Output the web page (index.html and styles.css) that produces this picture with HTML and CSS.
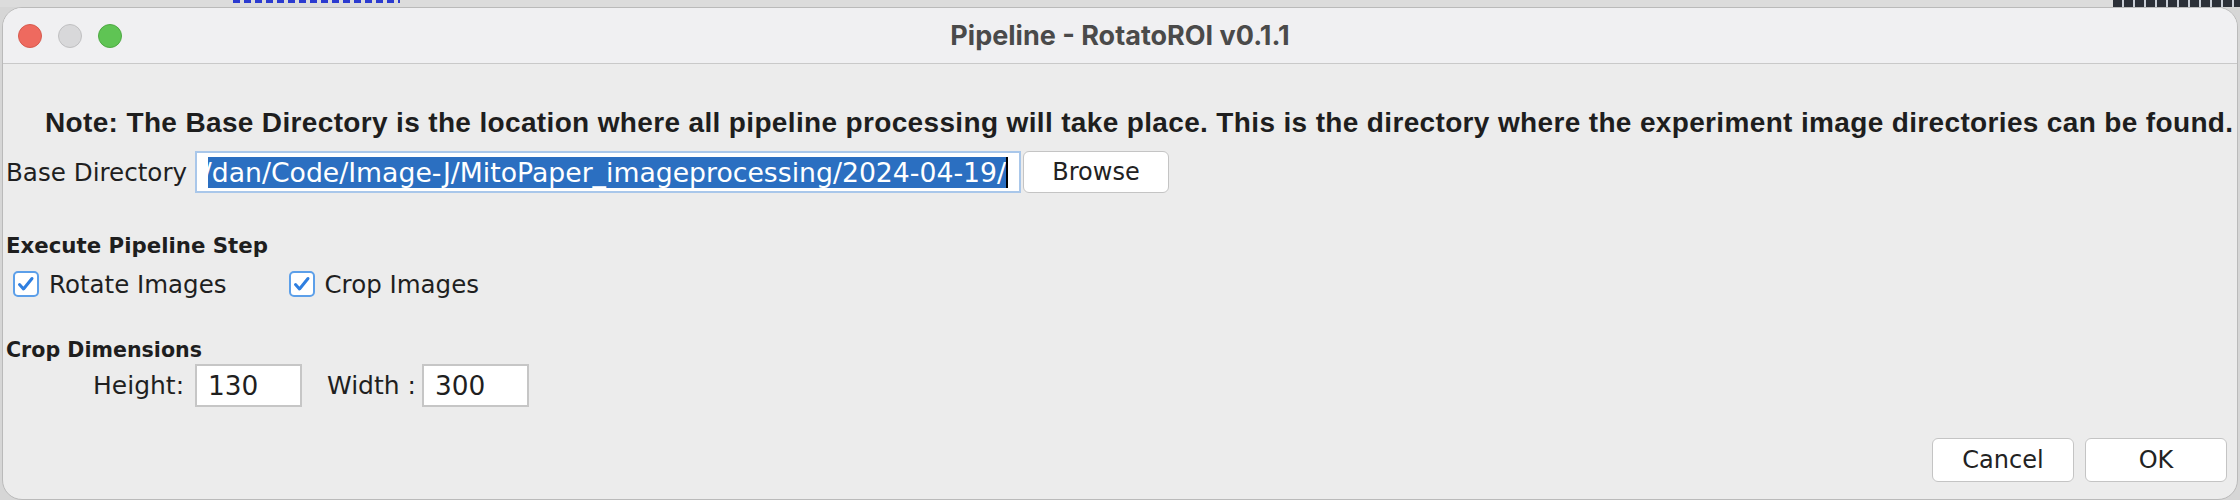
FILE: index.html
```html
<!DOCTYPE html>
<html>
<head>
<meta charset="utf-8">
<title>Pipeline - RotatoROI v0.1.1</title>
<link rel="stylesheet" href="styles.css">
</head>
<body>
<div class="backdrop">
  <div class="bd-left"></div>
  <div class="bd-blue"></div>
  <div class="bd-mid"></div>
  <div class="bd-dark"></div>
</div>
<div class="window">
  <div class="titlebar">
    <div class="lights">
      <span class="light red"></span>
      <span class="light grey"></span>
      <span class="light green"></span>
    </div>
    <div class="title">Pipeline - RotatoROI v0.1.1</div>
    <div></div>
  </div>
  <div class="content">
    <p class="note">Note: The Base Directory is the location where all pipeline processing will take place. This is the directory where the experiment image directories can be found.</p>
    <div class="base-row">
      <span class="lbl">Base Directory</span>
      <div class="path-field">
        <div class="path-clip"><span class="sel">/dan/Code/Image-J/MitoPaper_imageprocessing/2024-04-19/</span></div>
        <span class="caret"></span>
      </div>
      <button class="btn browse">Browse</button>
    </div>
    <div class="section exec-h">Execute Pipeline Step</div>
    <div class="checks">
      <div class="check-item">
        <span class="box"><svg viewBox="0 0 26 26" width="26" height="26"><polyline points="6.5,13.5 10.5,18 19,7.5" fill="none" stroke="#2f7fe0" stroke-width="3" stroke-linecap="round" stroke-linejoin="round"/></svg></span>
        <span>Rotate Images</span>
      </div>
      <div class="check-item second">
        <span class="box"><svg viewBox="0 0 26 26" width="26" height="26"><polyline points="6.5,13.5 10.5,18 19,7.5" fill="none" stroke="#2f7fe0" stroke-width="3" stroke-linecap="round" stroke-linejoin="round"/></svg></span>
        <span>Crop Images</span>
      </div>
    </div>
    <div class="section crop-h">Crop Dimensions</div>
    <div class="dims">
      <span class="dim-label h-label">Height:</span>
      <div class="num-field">130</div>
      <span class="dim-label w-label">Width :</span>
      <div class="num-field">300</div>
    </div>
    <div class="actions">
      <button class="btn action">Cancel</button>
      <button class="btn action">OK</button>
    </div>
  </div>
</div>
</body>
</html>
```
FILE: styles.css
```css
html, body {
  margin: 0;
  padding: 0;
}
body {
  width: 2240px;
  height: 500px;
  overflow: hidden;
  background: #d6d6d6;
  font-family: "DejaVu Sans", sans-serif;
  color: #1f1f1f;
}
.backdrop {
  display: flex;
  height: 7px;
}
.bd-left { width: 233px; background: #dcdcdc; }
.bd-blue {
  width: 167px;
  background-color: #dcdcdc;
  background-image: repeating-linear-gradient(90deg, #2b3ad0 0 7px, transparent 7px 11px);
  background-size: 100% 3px;
  background-repeat: no-repeat;
}
.bd-mid { flex: 1; background: #dcdcdc; }
.bd-dark {
  width: 127px;
  background: repeating-linear-gradient(90deg, #2c3038 0 9px, #c9ced6 9px 11px);
}
.window {
  margin-left: 2px;
  width: 2236px;
  height: 493px;
  box-sizing: border-box;
  border: 1px solid #bababa;
  border-radius: 20px;
  background: #ececec;
  overflow: hidden;
}
.titlebar {
  height: 55px;
  border-bottom: 1px solid #c9c9c9;
  background: #f0f0f2;
  display: grid;
  grid-template-columns: 1fr auto 1fr;
  align-items: center;
}
.lights {
  display: flex;
  gap: 16px;
  padding-left: 15px;
}
.light {
  width: 24px;
  height: 24px;
  box-sizing: border-box;
  border-radius: 50%;
  border: 1px solid;
}
.red { background: #ee6a5f; border-color: #d65a4e; }
.grey { background: #d8d8da; border-color: #bfbfc1; }
.green { background: #5fc454; border-color: #4ea843; }
.title {
  font-family: Inter, "Liberation Sans", sans-serif;
  font-weight: 700;
  font-size: 27px;
  color: #4a4a4a;
  white-space: nowrap;
}
.content {
  padding: 0 10px 0 3px;
}
.note {
  margin: 43px 0 0;
  padding-left: 39px;
  font-family: "Liberation Sans", Arial, sans-serif;
  font-weight: 700;
  font-size: 28px;
  letter-spacing: 0.35px;
  line-height: 32px;
  color: #1e1e1e;
  white-space: nowrap;
}
.base-row {
  margin-top: 12px;
  height: 42px;
  display: flex;
  align-items: center;
  font-size: 24.6px;
}
.lbl {
  width: 189px;
  flex-shrink: 0;
}
.path-field {
  width: 826px;
  height: 42px;
  box-sizing: border-box;
  border: 2px solid #a9c7ea;
  background: #fff;
  display: flex;
  align-items: center;
  padding: 0 11px;
  flex-shrink: 0;
}
.path-clip {
  flex: 1;
  min-width: 0;
  overflow: hidden;
  display: flex;
  justify-content: flex-end;
  height: 31px;
}
.sel {
  flex-shrink: 0;
  white-space: nowrap;
  background: #2b6fc1;
  color: #fff;
  line-height: 31px;
  font-size: 26.7px;
}
.caret {
  width: 2px;
  height: 31px;
  background: #000;
  flex-shrink: 0;
}
.btn {
  font-family: "DejaVu Sans", sans-serif;
  font-size: 24px;
  color: #222;
  background: #fff;
  border: 1.5px solid #c4c4c4;
  border-radius: 6px;
  padding: 0;
  box-sizing: border-box;
}
.browse {
  margin-left: 2px;
  width: 146px;
  height: 42px;
}
.section {
  font-weight: 700;
  font-size: 21.3px;
  line-height: 25px;
  color: #1e1e1e;
}
.exec-h { margin-top: 40px; }
.checks {
  margin-top: 11px;
  height: 30px;
  display: flex;
  align-items: center;
  padding-left: 7px;
  font-size: 24.5px;
}
.check-item {
  display: flex;
  align-items: center;
  gap: 10px;
}
.check-item.second { margin-left: 62px; }
.box {
  width: 26px;
  height: 26px;
  box-sizing: border-box;
  border: 2px solid #5c9fe9;
  border-radius: 5px;
  background: #fff;
  display: flex;
  align-items: center;
  justify-content: center;
  overflow: hidden;
}
.box svg { flex-shrink: 0; }
.crop-h {
  margin-top: 39px;
  font-size: 20.6px;
  line-height: 24px;
}
.dims {
  margin-top: 2px;
  height: 43px;
  display: flex;
  align-items: center;
  padding-left: 87px;
  font-size: 25px;
}
.dim-label { flex-shrink: 0; }
.h-label { width: 102px; }
.w-label { width: 95px; margin-left: 25px; }
.num-field {
  width: 107px;
  height: 43px;
  box-sizing: border-box;
  border: 2px solid #c6c6c6;
  background: #fff;
  padding-left: 11px;
  line-height: 39px;
  font-size: 26.4px;
}
.actions {
  margin-top: 31px;
  display: flex;
  justify-content: flex-end;
  gap: 11px;
}
.action {
  width: 142px;
  height: 44px;
}
```
